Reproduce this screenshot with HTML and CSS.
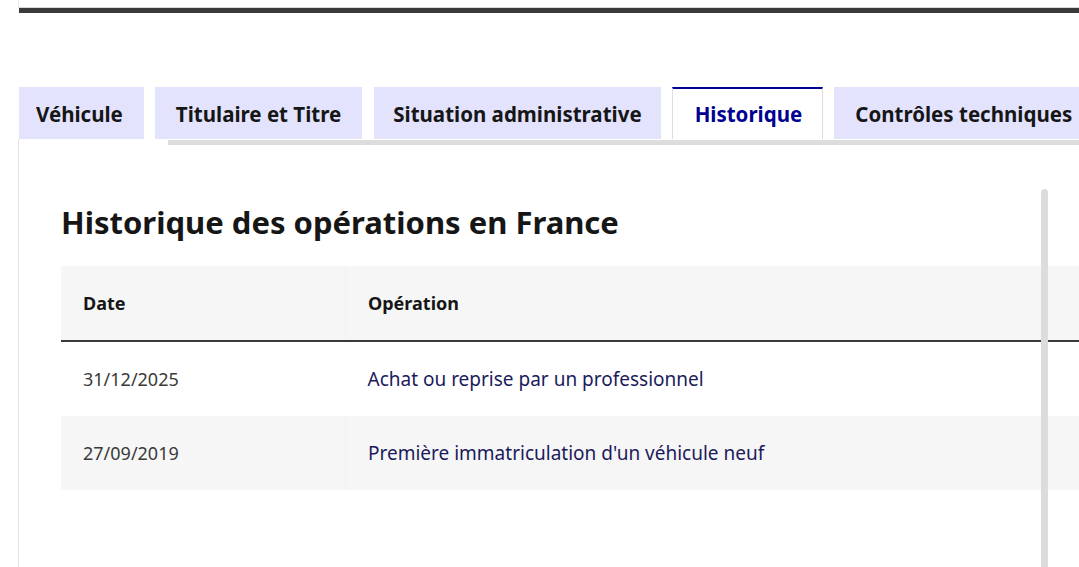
FILE: index.html
```html
<!DOCTYPE html>
<html lang="fr">
<head>
<meta charset="utf-8">
<title>Historique</title>
<link rel="stylesheet" href="styles.css">
</head>
<body>
<div class="page">
  <div class="top-box"></div>
  <div class="top-bar"></div>

  <nav class="tabs">
    <ul class="tab-list">
      <li class="tab tab--first">Véhicule</li>
      <li class="tab">Titulaire et Titre</li>
      <li class="tab tab--narrow">Situation administrative</li>
      <li class="tab tab--active">Historique</li>
      <li class="tab">Contrôles techniques</li>
    </ul>
    <div class="tab-line"></div>
  </nav>

  <section class="panel">
    <h3 class="panel-title">Historique des opérations en France</h3>
    <table class="ops">
      <thead>
        <tr><th class="col-date">Date</th><th>Opération</th></tr>
      </thead>
      <tbody>
        <tr><td class="date">31/12/2025</td><td class="op">Achat ou reprise par un professionnel</td></tr>
        <tr class="alt"><td class="date">27/09/2019</td><td class="op">Première immatriculation d'un véhicule neuf</td></tr>
      </tbody>
    </table>
    <div class="scrollbar"></div>
  </section>
</div>
</body>
</html>
```

FILE: styles.css
```css
html, body {
  margin: 0;
  padding: 0;
  background: #ffffff;
  overflow: hidden;
}
body {
  width: 1079px;
  height: 567px;
  font-family: "Noto Sans", "Lato", sans-serif;
  color: #161616;
}
.page {
  position: relative;
  width: 1079px;
  height: 567px;
  overflow: hidden;
}
.top-box {
  margin-left: 18px;
  border-left: 1px solid #e8e8e8;
  border-bottom: 1px solid #d8d8d8;
  box-sizing: border-box;
  height: 8px;
}
.top-bar {
  margin-left: 19px;
  height: 5px;
  background: #3a3a3a;
}

.tabs {
  margin-top: 74px;
}
.tab-list {
  list-style: none;
  margin: 0 0 0 19px;
  padding: 0;
  display: flex;
  gap: 11px;
  white-space: nowrap;
  height: 52px;
}
.tab {
  flex: none;
  box-sizing: border-box;
  height: 52px;
  padding: 1px 21px 0;
  display: flex;
  align-items: center;
  background: #e3e3fd;
  font-size: 20.5px;
  font-weight: 700;
  color: #161616;
}
.tab--first {
  padding-left: 17px;
}
.tab--narrow {
  margin-left: 1px;
  padding: 1px 19px 0;
}
.tab--active {
  background: #ffffff;
  color: #000091;
  border-top: 2px solid #000091;
  border-left: 1px solid #dddddd;
  border-right: 1px solid #dddddd;
  padding: 0 20px 0 22px;
}
.tab-line {
  margin-left: 168px;
  height: 5px;
  margin-top: 1px;
  background: #dddddd;
}

.panel {
  position: relative;
  margin-left: 18px;
  margin-top: -6px;
  border-left: 1px solid #e5e5e5;
  height: 430px;
  padding: 63px 0 0 42px;
}
.panel-title {
  margin: 0 0 24px 0;
  font-size: 31px;
  line-height: 40px;
  font-weight: 700;
  color: #161616;
}
.ops {
  border-collapse: collapse;
  width: 1100px;
  font-size: 19px;
}
.ops th {
  background: #f6f6f6;
  height: 74px;
  text-align: left;
  padding: 0 22px;
  font-weight: 700;
  font-size: 18px;
  border-bottom: 2px solid #3a3a3a;
}
.ops th.col-date {
  width: 240px;
  border-right: 1px solid #f1f1f1;
}
.ops td {
  height: 74px;
  padding: 0 22px;
}
.ops .alt td {
  background: #f6f6f6;
}
.ops .alt td.date {
  border-right: 1px solid #f1f1f1;
}
.ops td.date {
  color: #3a3a3a;
  font-size: 18px;
}
.ops td.op {
  color: #1b1b5c;
}
.scrollbar {
  position: absolute;
  left: 1022px;
  top: 50px;
  width: 7px;
  height: 420px;
  border-radius: 4px 4px 0 0;
  background: #dcdcdc;
}
```
